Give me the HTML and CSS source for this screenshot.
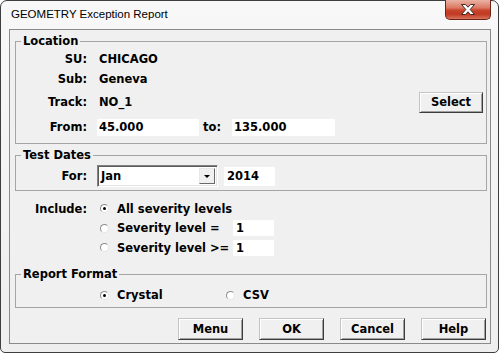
FILE: index.html
```html
<!DOCTYPE html>
<html lang="en">
<head>
    <meta charset="UTF-8">
    <title>GEOMETRY Exception Report</title>
    <link rel="stylesheet" href="styles.css">
</head>
<body>
    <div class="window">
        <div class="titlebar">
            <span class="title">GEOMETRY Exception Report</span>
            <button class="close" title="Close">
                <svg width="14" height="11" viewBox="0 0 14 11">
                    <path d="M0.5 0.5H4.5L7 3.2L9.5 0.5H13.5L9.2 5.5L13.5 10.5H9.5L7 7.8L4.5 10.5H0.5L4.8 5.5Z" fill="#fff" stroke="#3b2a28" stroke-width="1" stroke-linejoin="round"/>
                </svg>
            </button>
        </div>

        <div class="client">
            <fieldset class="group location">
                <legend>Location</legend>
                <div class="row h20">
                    <span class="lbl">SU:</span>
                    <span class="val">CHICAGO</span>
                </div>
                <div class="row h20">
                    <span class="lbl">Sub:</span>
                    <span class="val">Geneva</span>
                </div>
                <div class="row h26">
                    <span class="lbl">Track:</span>
                    <span class="val">NO_1</span>
                    <button class="btn select">Select</button>
                </div>
                <div class="row h24">
                    <span class="lbl">From:</span>
                    <span class="field from">45.000</span>
                    <span class="to">to:</span>
                    <span class="field upto">135.000</span>
                </div>
            </fieldset>

            <fieldset class="group dates">
                <legend>Test Dates</legend>
                <div class="row h24">
                    <span class="lbl">For:</span>
                    <div class="combo">
                        <span class="combo-text">Jan</span>
                        <span class="combo-arrow"><span class="tri"></span></span>
                    </div>
                    <span class="field year">2014</span>
                </div>
            </fieldset>

            <div class="options">
                <div class="row h19">
                    <span class="lbl">Include:</span>
                    <span class="radio checked"></span>
                    <span class="opt-text">All severity levels</span>
                </div>
                <div class="row h20">
                    <span class="lbl"></span>
                    <span class="radio"></span>
                    <span class="opt-text sev">Severity level =</span>
                    <span class="field level">1</span>
                </div>
                <div class="row h19">
                    <span class="lbl"></span>
                    <span class="radio"></span>
                    <span class="opt-text sev">Severity level &gt;=</span>
                    <span class="field level">1</span>
                </div>
            </div>

            <fieldset class="group report">
                <legend>Report Format</legend>
                <div class="row h20 formats">
                    <span class="format first">
                        <span class="radio checked"></span>
                        <span class="opt-text">Crystal</span>
                    </span>
                    <span class="format">
                        <span class="radio"></span>
                        <span class="opt-text">CSV</span>
                    </span>
                </div>
            </fieldset>

            <div class="actions">
                <button class="btn">Menu</button>
                <button class="btn">OK</button>
                <button class="btn">Cancel</button>
                <button class="btn">Help</button>
            </div>
        </div>
    </div>
</body>
</html>
```

FILE: styles.css
```css
:root {
    --face: #f0f0f0;
    --group-line: #a5a5a5;
    --shadow: #a0a0a0;
    --dark: #3c3c3c;
}

* {
    box-sizing: border-box;
}

body {
    margin: 0;
    background: #ffffff;
}

.window {
    width: 499px;
    height: 353px;
    border: 1px solid #3e3e3e;
    border-radius: 7px 7px 5px 5px;
    background: linear-gradient(#f8f8f8, #eeeeee);
    padding: 0 7px 0 8px;
    font-family: "DejaVu Sans", sans-serif;
    font-size: 11.5px;
    font-weight: bold;
    color: #000;
}

/* Title bar */
.titlebar {
    height: 28px;
    display: flex;
    align-items: flex-start;
}

.title {
    font-family: "Liberation Sans", Arial, sans-serif;
    font-weight: normal;
    font-size: 11.5px;
    line-height: 14px;
    margin-top: 6px;
    padding-left: 2px;
}

.close {
    margin-left: auto;
    margin-top: -1px;
    width: 46px;
    height: 20px;
    padding: 0;
    border: 1px solid #6b2419;
    border-top: none;
    border-radius: 0 0 5px 5px;
    background: linear-gradient(#eab2a5 0%, #dc7a64 40%, #c8432b 55%, #c23a22 75%, #d9735b 100%);
    display: flex;
    align-items: center;
    justify-content: center;
}

/* Client area */
.client {
    width: 482px;
    height: 315px;
    border: 1px solid #8a8a8a;
    background: var(--face);
}

.group {
    margin: 4px 3px 0 5px;
    padding: 0;
    border: 1px solid var(--group-line);
    min-width: 0;
}

.group legend {
    margin-left: 5px;
    padding: 0 2px;
    line-height: 14px;
}

.row {
    display: flex;
    align-items: center;
}

.h19 { height: 19px; }
.h20 { height: 20px; }
.h24 { height: 24px; }
.h26 { height: 26px; }

.lbl {
    flex: none;
    width: 71px;
    margin-right: 10px;
    text-align: right;
}

.val {
    padding-left: 2px;
}

.field {
    background: #ffffff;
    padding-left: 2px;
}

/* Location */
.location {
    padding: 1px 0 4px;
}

.field.from {
    width: 102px;
    height: 17px;
    line-height: 17px;
}

.to {
    width: 29px;
    margin-left: 4px;
}

.field.upto {
    width: 103px;
    height: 17px;
    line-height: 17px;
}

/* Buttons */
.btn {
    height: 22px;
    width: 65px;
    padding: 0;
    background: var(--face);
    border: 1px solid;
    border-color: #c4c4c4 var(--dark) var(--dark) #c4c4c4;
    box-shadow: inset 1px 1px #ffffff, inset -1px -1px var(--shadow);
    font: inherit;
    color: #000;
}

.btn.select {
    width: 64px;
    height: 21px;
    margin-left: auto;
    margin-right: 3px;
}

/* Test dates */
.dates {
    padding: 2px 0 2px;
}

.combo {
    width: 121px;
    height: 22px;
    display: flex;
    align-items: stretch;
    background: #ffffff;
    border: 1px solid;
    border-color: #828282 #ffffff #ffffff #828282;
    box-shadow: inset 1px 1px #5a5a5a, inset -1px -1px #e3e3e3;
    padding: 2px;
}

.combo-text {
    flex: 1;
    padding-left: 1px;
    line-height: 16px;
}

.combo-arrow {
    width: 16px;
    background: var(--face);
    border: 1px solid;
    border-color: #e8e8e8 #6a6a6a #6a6a6a #e8e8e8;
    display: flex;
    align-items: center;
    justify-content: center;
}

.tri {
    width: 0;
    height: 0;
    border-left: 3px solid transparent;
    border-right: 3px solid transparent;
    border-top: 3px solid #000;
    margin-top: 1px;
}

.field.year {
    width: 51px;
    height: 19px;
    line-height: 19px;
    margin-left: 6px;
    padding-left: 3px;
}

/* Include options */
.options {
    padding: 8px 0 0 6px;
}

.radio {
    flex: none;
    width: 9px;
    height: 9px;
    margin-left: 3px;
    border-radius: 50%;
    border: 1px solid;
    border-color: #8e8e8e #e6e6e6 #e6e6e6 #8e8e8e;
    background: #ffffff;
    display: flex;
    align-items: center;
    justify-content: center;
}

.radio.checked::after {
    content: "";
    width: 3px;
    height: 3px;
    border-radius: 50%;
    background: #000;
}

.opt-text {
    margin-left: 8px;
}

.opt-text.sev {
    width: 116px;
}

.field.level {
    width: 41px;
    height: 16px;
    line-height: 16px;
    padding-left: 3px;
}

/* Report format */
.report {
    margin-top: 10px;
    padding: 4px 0 2px;
}

.formats {
    padding-left: 81px;
}

.format {
    display: flex;
    align-items: center;
}

.format.first {
    width: 126px;
}

/* Bottom buttons */
.actions {
    display: flex;
    justify-content: flex-end;
    gap: 16px;
    margin-top: 10px;
    padding-right: 4px;
}
```
